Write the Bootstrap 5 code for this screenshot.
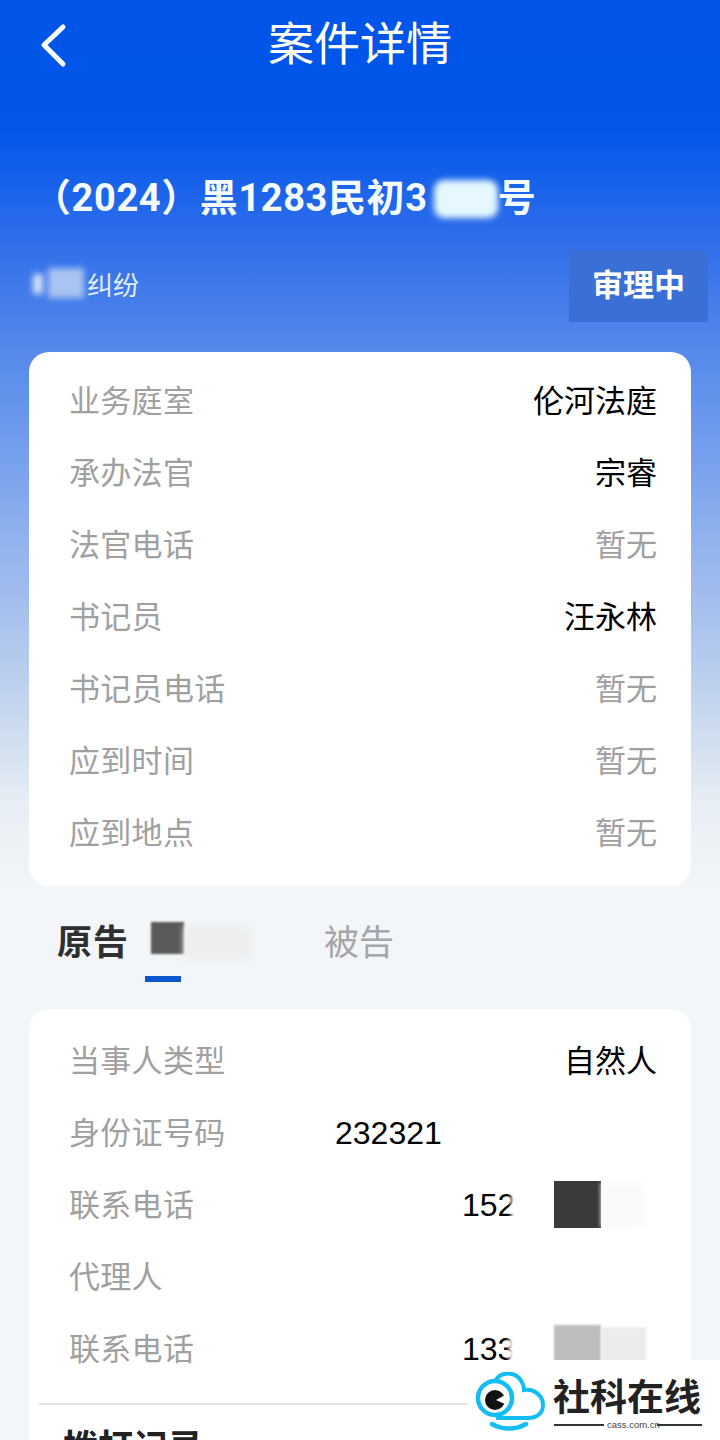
<!DOCTYPE html>
<html lang="zh-CN">
<head>
    <meta charset="UTF-8">
    <meta name="viewport" content="width=device-width, initial-scale=1.0">
    <title>案件详情</title>
    <link href="https://cdn.jsdelivr.net/npm/bootstrap@5.3.0/dist/css/bootstrap.min.css" rel="stylesheet">
    <style>
        html, body {
            height: 1440px;
            overflow: hidden;
        }
        body {
            width: 720px;
            font-family: "Noto Sans CJK SC", "Liberation Sans", sans-serif;
            background: linear-gradient(180deg, #0055e9 0, #0257ea 130px, #2c6ceb 230px, #4b82ea 320px, #7ea5ed 480px, #bcd0ee 680px, #e6edf3 800px, #f3f6f8 890px);
            position: relative;
        }
        .top-bar {
            height: 88px;
        }
        .top-bar svg {
            position: absolute;
            left: 37px;
            top: 22px;
        }
        .top-title {
            font-size: 46px;
            line-height: 80px;
            color: #fff;
        }
        .case-no {
            margin-top: 82px;
            height: 56px;
            padding-left: 33px;
            font-size: 38px;
            line-height: 56px;
            font-weight: 700;
            color: #f4fbff;
            font-family: Roboto, "Noto Sans CJK SC", sans-serif;
            position: relative;
            white-space: nowrap;
        }
        .case-no .case-digits {
            letter-spacing: .6px;
        }
        .case-row {
            margin-top: 24px;
            height: 72px;
            padding-left: 87px;
            padding-right: 12px;
            position: relative;
        }
        .case-type {
            font-size: 26px;
            color: #e3edfb;
            padding-bottom: 6px;
        }
        .status-box {
            width: 139px;
            height: 72px;
            background: #3a70d6;
            color: #fff;
            font-size: 31px;
            font-weight: 700;
            padding-bottom: 6px;
        }
        .info-box {
            margin: 30px 29px 0;
            background: #fff;
            border-radius: 20px;
            padding: 11px 34px 19px 41px;
        }
        .info-line {
            height: 72px;
            font-size: 31px;
            color: #000;
        }
        .info-line > span:first-child {
            color: #a0a0a0;
            margin-left: -1px;
            letter-spacing: .3px;
        }
        .none-val {
            color: #a0a0a0;
        }
        .tab-row {
            height: 123px;
            padding-left: 57px;
            padding-bottom: 14px;
            position: relative;
            font-size: 35px;
        }
        .tab-on {
            font-weight: 700;
            color: #2f2f2f;
            letter-spacing: 1px;
        }
        .tab-off {
            margin-left: 195px;
            color: #a4a6a8;
        }
        .tab-line {
            position: absolute;
            left: 145px;
            top: 90px;
            width: 36px;
            height: 6px;
            background: #0b57d0;
        }
        .party-box {
            margin: 0 29px;
            background: #fff;
            border-radius: 20px 20px 0 0;
            padding: 14px 34px 0 41px;
            height: 440px;
            position: relative;
        }
        .num-val {
            font-family: "Liberation Sans", sans-serif;
            font-size: 32px;
            padding-top: 4px;
        }
        .party-rule {
            margin: 20px 0 0 -31px;
            width: 430px;
            height: 2px;
            background: #e4e4e4;
        }
        .party-head {
            margin: 14px 0 0 -7px;
            font-size: 35px;
            font-weight: 700;
            color: #222;
            line-height: 52px;
        }
        .smudge {
            position: absolute;
            display: block;
        }
        .s-blur {
            filter: blur(3px);
        }
        .mark-box {
            position: absolute;
            left: 468px;
            top: 1360px;
            width: 252px;
            height: 80px;
            background: #fff;
        }
        .mark-box svg {
            position: absolute;
            left: 6px;
            top: 12px;
        }
        .mark-name {
            position: absolute;
            left: 85px;
            top: 12px;
            font-size: 37px;
            line-height: 46px;
            font-weight: 700;
            color: #222;
            white-space: nowrap;
        }
        .mark-url {
            position: absolute;
            left: 139px;
            top: 58px;
            font-family: "Liberation Sans", sans-serif;
            font-size: 9.5px;
            line-height: 14px;
            color: #444;
        }
        .mark-dash {
            position: absolute;
            top: 64px;
            height: 2px;
            background: #333;
        }
    </style>
</head>
<body>
    <div class="top-bar d-flex justify-content-center">
        <svg width="32" height="46" viewBox="0 0 32 46" fill="none"><path d="M26 5 L7 23 L26 42" stroke="#fff" stroke-width="5" stroke-linecap="round" stroke-linejoin="round"/></svg>
        <div class="top-title">案件详情</div>
    </div>

    <div class="case-no">
        <span class="case-digits">（2024）黑1283民初3</span><span class="d-inline-block" style="width:70px"></span>号
        <span class="smudge s-blur" style="left:434px;top:10px;width:64px;height:38px;background:#e6f8fd;border-radius:10px"></span>
    </div>

    <div class="case-row d-flex justify-content-between align-items-center">
        <span class="case-type">纠纷</span>
        <span class="status-box d-flex align-items-center justify-content-center">审理中</span>
        <span class="smudge s-blur" style="left:48px;top:18px;width:36px;height:30px;background:#a9c4f0"></span>
        <span class="smudge s-blur" style="left:33px;top:24px;width:10px;height:20px;background:#d4e2f8"></span>
    </div>

    <div class="info-box">
        <div class="info-line d-flex justify-content-between align-items-center"><span>业务庭室</span><span>伦河法庭</span></div>
        <div class="info-line d-flex justify-content-between align-items-center"><span>承办法官</span><span>宗睿</span></div>
        <div class="info-line d-flex justify-content-between align-items-center"><span>法官电话</span><span class="none-val">暂无</span></div>
        <div class="info-line d-flex justify-content-between align-items-center"><span>书记员</span><span>汪永林</span></div>
        <div class="info-line d-flex justify-content-between align-items-center"><span>书记员电话</span><span class="none-val">暂无</span></div>
        <div class="info-line d-flex justify-content-between align-items-center"><span>应到时间</span><span class="none-val">暂无</span></div>
        <div class="info-line d-flex justify-content-between align-items-center"><span>应到地点</span><span class="none-val">暂无</span></div>
    </div>

    <div class="tab-row d-flex align-items-center">
        <span class="tab-on">原告</span>
        <span class="tab-off">被告</span>
        <span class="tab-line"></span>
        <span class="smudge" style="left:151px;top:36px;width:33px;height:32px;background:#5a5a5a;filter:blur(1px)"></span>
        <span class="smudge s-blur" style="left:184px;top:40px;width:66px;height:34px;background:#eceef0"></span>
    </div>

    <div class="party-box">
        <div class="info-line d-flex justify-content-between align-items-center"><span>当事人类型</span><span>自然人</span></div>
        <div class="info-line d-flex justify-content-between align-items-center"><span>身份证号码</span><span class="num-val" style="width:322px">232321</span></div>
        <div class="info-line d-flex justify-content-between align-items-center"><span>联系电话</span><span class="num-val" style="width:195px">152</span></div>
        <div class="info-line d-flex justify-content-between align-items-center"><span>代理人</span></div>
        <div class="info-line d-flex justify-content-between align-items-center"><span>联系电话</span><span class="num-val" style="width:195px">133</span></div>
        <div class="party-rule"></div>
        <div class="party-head">拨打记录</div>
        <span class="smudge" style="left:482px;top:176px;width:20px;height:40px;background:#fff;filter:blur(2px)"></span>
        <span class="smudge" style="left:480px;top:320px;width:22px;height:40px;background:#fff;filter:blur(2px)"></span>
        <span class="smudge" style="left:525px;top:172px;width:47px;height:47px;background:#3a3a3a"></span>
        <span class="smudge" style="left:572px;top:174px;width:42px;height:44px;background:#f9f9f9;filter:blur(2px)"></span>
        <span class="smudge" style="left:525px;top:316px;width:47px;height:44px;background:#bdbdbd;filter:blur(1px)"></span>
        <span class="smudge" style="left:572px;top:318px;width:45px;height:42px;background:#ececec;filter:blur(1px)"></span>
    </div>

    <div class="mark-box">
        <svg width="76" height="62" viewBox="0 0 76 62" fill="none">
            <path d="M22 8 C26 1 34 1 38 2 C46 4 50 12 50 18 C60 16 69 24 69 33 C69 42 62 46 54 46 L22 46" stroke="#12bdf4" stroke-width="4"/>
            <circle cx="21" cy="26" r="17" stroke="#12bdf4" stroke-width="4.5"/>
            <circle cx="21" cy="28" r="10" fill="#111"/>
            <path d="M22 28 L33 22 L33 33 Z" fill="#fff"/>
            <path d="M18 52 C28 58 42 58 52 52" stroke="#12bdf4" stroke-width="4.5" stroke-linecap="round"/>
        </svg>
        <span class="mark-name">社科在线</span>
        <span class="mark-dash" style="left:86px;width:50px"></span>
        <span class="mark-url">cass.com.cn</span>
        <span class="mark-dash" style="left:189px;width:45px"></span>
    </div>

    <script src="https://cdn.jsdelivr.net/npm/bootstrap@5.3.0/dist/js/bootstrap.bundle.min.js"></script>
</body>
</html>
